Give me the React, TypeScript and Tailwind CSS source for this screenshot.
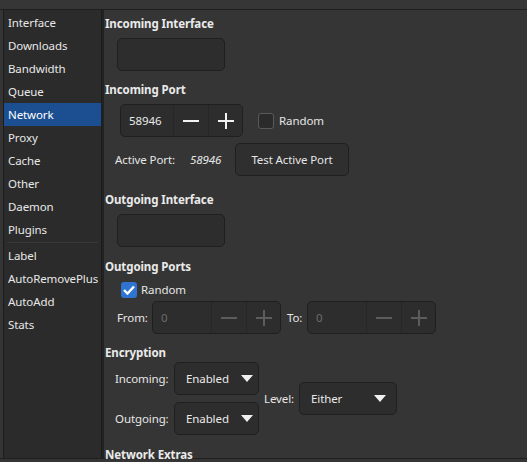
import React from 'react';

const font = { fontFamily: '"Noto Sans", "Open Sans", sans-serif' };

const navItems = ['Interface', 'Downloads', 'Bandwidth', 'Queue', 'Network', 'Proxy', 'Cache', 'Other', 'Daemon', 'Plugins'];
const pluginItems = ['Label', 'AutoRemovePlus', 'AutoAdd', 'Stats'];

const Minus = ({ c }: { c: string }) => (
  <svg width="16" height="16" viewBox="0 0 16 16">
    <rect x="0" y="7" width="16" height="2" fill={c} />
  </svg>
);

const Plus = ({ c }: { c: string }) => (
  <svg width="16" height="16" viewBox="0 0 16 16">
    <rect x="0" y="7" width="16" height="2" fill={c} />
    <rect x="7" y="0" width="2" height="16" fill={c} />
  </svg>
);

const Caret = () => (
  <svg width="12" height="7" viewBox="0 0 12 7">
    <path d="M0 0 L12 0 L6 7 Z" fill="#f0f0f0" />
  </svg>
);

const Heading: React.FC<{ children: React.ReactNode; className?: string }> = ({ children, className }) => (
  <div className={`h-[16px] leading-[16px] text-[11.5px] font-bold text-[#eaeaea] ${className ?? ''}`}>{children}</div>
);

const SpinBox: React.FC<{ value: string; first: number; disabled?: boolean; className?: string }> = ({ value, first, disabled, className }) => {
  const ic = disabled ? '#5c5c5c' : '#f2f2f2';
  return (
    <div className={`flex h-[33px] rounded-[5px] border border-[#1f1f1f] bg-[#2d2d2d] ${className ?? ''}`}>
      <div style={{ width: first }} className={`flex items-center pl-[8px] ${disabled ? 'text-[#6c6c6c]' : 'text-[#eaeaea]'}`}>
        {value}
      </div>
      <div className="flex w-[35px] items-center justify-center border-l border-[#262626]">
        <Minus c={ic} />
      </div>
      <div className="flex w-[34px] items-center justify-center border-l border-[#262626]">
        <Plus c={ic} />
      </div>
    </div>
  );
};

const Dropdown: React.FC<{ label: string; w: string; gap: string }> = ({ label, w, gap }) => (
  <div className={`flex h-[33px] ${w} items-center rounded-[5px] border border-[#1f1f1f] bg-[#2d2d2d] pl-[11px] text-[#eaeaea]`}>
    <span className={gap}>{label}</span>
    <Caret />
  </div>
);

export default function App() {
  return (
    <div style={font} className="flex h-[462px] w-[527px] flex-col overflow-hidden bg-[#353535] text-[11.5px] tracking-[-0.1px] text-[#e6e6e6]">
      <div className="h-[10px] shrink-0 border-b border-[#1f1f1f] bg-[#363636]" />
      <div className="flex h-[449px] shrink-0 border-b border-[#1f1f1f]">
        <div className="ml-[3px] w-[99px] shrink-0 border-x border-[#1c1c1c] bg-[#2b2b2b] pt-[1px]">
          {navItems.map((n) => (
            <div
              key={n}
              className={`h-[23px] pl-[4px] leading-[23px] ${n === 'Network' ? 'bg-[#1b4f91] text-white' : 'text-[#e8e8e8]'}`}
            >
              {n}
            </div>
          ))}
          <div className="mx-[3px] my-[1px] h-[1px] bg-[#383838]" />
          {pluginItems.map((n) => (
            <div key={n} className="h-[23px] pl-[4px] leading-[23px] text-[#e8e8e8]">
              {n}
            </div>
          ))}
        </div>
        <div className="w-[2px] shrink-0 bg-[#222222]" />
        <div className="flex-1 pl-[1px]">
          <Heading className="mt-[6px]">Incoming Interface</Heading>
          <div className="ml-[12px] mt-[6px] h-[33px] w-[108px] rounded-[5px] border border-[#1f1f1f] bg-[#2d2d2d]" />

          <Heading className="mt-[11px]">Incoming Port</Heading>
          <div className="mt-[6px] flex items-center">
            <SpinBox value="58946" first={52} className="ml-[15px]" />
            <div className="ml-[15px] h-[16px] w-[16px] rounded-[3px] border border-[#5a5a5a] bg-[#2b2b2b]" />
            <span className="ml-[5px]">Random</span>
          </div>
          <div className="mt-[6px] flex h-[33px] items-center">
            <span className="ml-[10px] w-[75px]">Active Port:</span>
            <span className="w-[45px] italic">58946</span>
            <div className="flex h-[33px] w-[114px] items-center justify-center rounded-[5px] border border-[#1f1f1f] bg-[#2f2f2f]">
              Test Active Port
            </div>
          </div>

          <Heading className="mt-[16px]">Outgoing Interface</Heading>
          <div className="ml-[12px] mt-[6px] h-[33px] w-[108px] rounded-[5px] border border-[#1f1f1f] bg-[#2d2d2d]" />

          <Heading className="mt-[12px]">Outgoing Ports</Heading>
          <div className="ml-[16px] mt-[7px] flex h-[16px] items-center">
            <div className="flex h-[16px] w-[16px] items-center justify-center rounded-[3px] bg-[#2f74d0]">
              <svg width="12" height="10" viewBox="0 0 12 10">
                <path d="M1 5 L4.5 8.5 L11 1.5" stroke="white" strokeWidth="2.4" fill="none" />
              </svg>
            </div>
            <span className="ml-[4px]">Random</span>
          </div>
          <div className="mt-[3px] flex items-center">
            <span className="ml-[12px] w-[35px]">From:</span>
            <SpinBox value="0" first={58} disabled />
            <span className="ml-[6px] w-[20px]">To:</span>
            <SpinBox value="0" first={58} disabled />
          </div>

          <Heading className="mt-[11px]">Encryption</Heading>
          <div className="mt-[1px] flex items-center">
            <div className="flex flex-col gap-[7px]">
              <div className="flex items-center">
                <span className="ml-[10px] w-[59px]">Incoming:</span>
                <Dropdown label="Enabled" w="w-[85px]" gap="mr-[12px]" />
              </div>
              <div className="flex items-center">
                <span className="ml-[10px] w-[59px]">Outgoing:</span>
                <Dropdown label="Enabled" w="w-[85px]" gap="mr-[12px]" />
              </div>
            </div>
            <span className="ml-[5px] w-[35px]">Level:</span>
            <Dropdown label="Either" w="w-[98px]" gap="mr-[32px]" />
          </div>

          <Heading className="mt-[12px]">Network Extras</Heading>
        </div>
      </div>
    </div>
  );
}
